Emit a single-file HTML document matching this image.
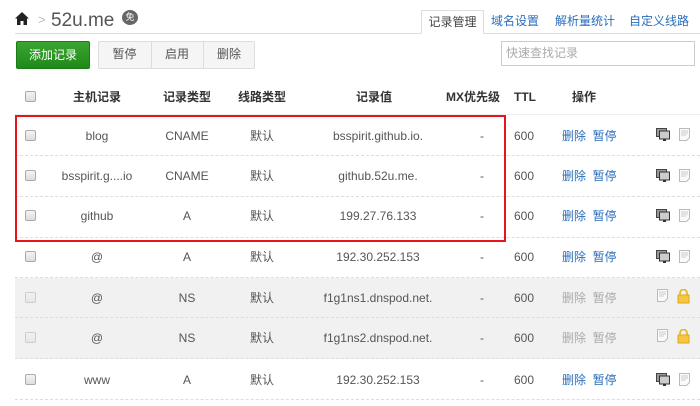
<!DOCTYPE html>
<html><head><meta charset="utf-8"><style>
*{margin:0;padding:0;box-sizing:border-box}
body{width:700px;height:406px;overflow:hidden;background:#fff;font-family:"Liberation Sans","Noto Sans CJK SC",sans-serif;font-size:12px;line-height:14px;color:#555;position:relative}
.a{position:absolute}
.c{position:absolute;transform:translateX(-50%);white-space:nowrap}
.cb{position:absolute;left:25px;width:11px;height:11px;border:1px solid #aaa;border-radius:2px;background:linear-gradient(#f4f4f4,#ddd)}
.row{position:absolute;left:15px;width:685px;border-bottom:1px dashed #ddd}
.tab{position:absolute;top:10px;height:24px;line-height:22px;font-size:12px;color:#2a6ebb;text-align:center}
.btn{position:absolute;top:41px;height:28px;line-height:26px;text-align:center;font-size:12px}
.blue{color:#2a6ebb}
</style></head><body>
<!-- header -->
<svg class="a" style="left:15px;top:12px" width="14" height="13" viewBox="0 0 14 13"><path d="M7 0L0 6.5h2V13h3.5V9h3v4H12V6.5h2z" fill="#222"/></svg>
<div class="a" style="left:38px;top:13px;font-size:13px;color:#bbb">&gt;</div>
<div class="a" style="left:51px;top:10px;font-size:19px;line-height:22px;color:#555">52u.me</div>
<div class="a" style="left:122px;top:10px;width:16px;height:15px;border-radius:50%;background:#666;color:#fff;font-size:9px;text-align:center;line-height:15px">免</div>
<div class="a" style="left:15px;top:33px;width:685px;height:1px;background:#ddd"></div>
<div class="tab" style="left:421px;width:63px;border:1px solid #ddd;border-bottom:1px solid #fff;background:#fff;color:#444">记录管理</div>
<div class="tab" style="left:485px;width:60px">域名设置</div>
<div class="tab" style="left:550px;width:70px">解析量统计</div>
<div class="tab" style="left:624px;width:70px">自定义线路</div>
<!-- buttons -->
<div class="btn" style="left:16px;width:74px;background:linear-gradient(#3aa530,#1f8a1a);border:1px solid #1c7a17;color:#fff;border-radius:2px">添加记录</div>
<div class="btn" style="left:98px;width:157px;border:1px solid #ddd;background:#f5f5f5;border-radius:2px"></div>
<div class="btn" style="left:98px;width:53px;color:#555">暂停</div>
<div class="a" style="left:151px;top:42px;width:1px;height:26px;background:#ddd"></div>
<div class="btn" style="left:151px;width:52px;color:#555">启用</div>
<div class="a" style="left:203px;top:42px;width:1px;height:26px;background:#ddd"></div>
<div class="btn" style="left:203px;width:52px;color:#555">删除</div>
<div class="a" style="left:501px;top:41px;width:194px;height:25px;border:1px solid #ccc;color:#aaa;line-height:23px;padding-left:4px">快速查找记录</div>
<!-- table header -->
<div class="cb" style="top:91px"></div>
<div style="font-weight:bold;color:#333">
<div class="c" style="left:97px;top:90px">主机记录</div>
<div class="c" style="left:187px;top:90px">记录类型</div>
<div class="c" style="left:262px;top:90px">线路类型</div>
<div class="c" style="left:374px;top:90px">记录值</div>
<div class="c" style="left:473px;top:90px">MX优先级</div>
<div class="a" style="left:514px;top:90px">TTL</div>
<div class="a" style="left:572px;top:90px">操作</div>
</div>
<div class="a" style="left:15px;top:114px;width:685px;height:1px;background:#eee"></div>
<!-- rows -->
<div class="row" style="top:115px;height:41px"></div>
<div class="row" style="top:156px;height:41px"></div>
<div class="row" style="top:197px;height:41px"></div>
<div class="row" style="top:238px;height:40px"></div>
<div class="row" style="top:278px;height:40px;background:#f1f1f1"></div>
<div class="row" style="top:318px;height:41px;background:#f1f1f1"></div>
<div class="row" style="top:359px;height:41px"></div>
<!-- row contents -->
<div>
<div class="cb" style="top:130px"></div><div class="c" style="left:97px;top:129px">blog</div><div class="c" style="left:187px;top:129px">CNAME</div><div class="c" style="left:262px;top:129px">默认</div><div class="c" style="left:378px;top:129px">bsspirit.github.io.</div><div class="c" style="left:482px;top:129px">-</div><div class="a" style="left:514px;top:129px">600</div>
<div class="cb" style="top:170px"></div><div class="c" style="left:97px;top:169px">bsspirit.g....io</div><div class="c" style="left:187px;top:169px">CNAME</div><div class="c" style="left:262px;top:169px">默认</div><div class="c" style="left:378px;top:169px">github.52u.me.</div><div class="c" style="left:482px;top:169px">-</div><div class="a" style="left:514px;top:169px">600</div>
<div class="cb" style="top:210px"></div><div class="c" style="left:97px;top:209px">github</div><div class="c" style="left:187px;top:209px">A</div><div class="c" style="left:262px;top:209px">默认</div><div class="c" style="left:378px;top:209px">199.27.76.133</div><div class="c" style="left:482px;top:209px">-</div><div class="a" style="left:514px;top:209px">600</div>
<div class="cb" style="top:251px"></div><div class="c" style="left:97px;top:250px">@</div><div class="c" style="left:187px;top:250px">A</div><div class="c" style="left:262px;top:250px">默认</div><div class="c" style="left:378px;top:250px">192.30.252.153</div><div class="c" style="left:482px;top:250px">-</div><div class="a" style="left:514px;top:250px">600</div>
<div class="cb" style="top:292px;opacity:.5"></div><div class="c" style="left:97px;top:291px">@</div><div class="c" style="left:187px;top:291px">NS</div><div class="c" style="left:262px;top:291px">默认</div><div class="c" style="left:378px;top:291px">f1g1ns1.dnspod.net.</div><div class="c" style="left:482px;top:291px">-</div><div class="a" style="left:514px;top:291px">600</div>
<div class="cb" style="top:332px;opacity:.5"></div><div class="c" style="left:97px;top:331px">@</div><div class="c" style="left:187px;top:331px">NS</div><div class="c" style="left:262px;top:331px">默认</div><div class="c" style="left:378px;top:331px">f1g1ns2.dnspod.net.</div><div class="c" style="left:482px;top:331px">-</div><div class="a" style="left:514px;top:331px">600</div>
<div class="cb" style="top:374px"></div><div class="c" style="left:97px;top:373px">www</div><div class="c" style="left:187px;top:373px">A</div><div class="c" style="left:262px;top:373px">默认</div><div class="c" style="left:378px;top:373px">192.30.252.153</div><div class="c" style="left:482px;top:373px">-</div><div class="a" style="left:514px;top:373px">600</div>
</div>
<!-- ops -->
<div class="a blue" style="left:562px;top:129px">删除&nbsp;&nbsp;暂停</div>
<div class="a blue" style="left:562px;top:169px">删除&nbsp;&nbsp;暂停</div>
<div class="a blue" style="left:562px;top:209px">删除&nbsp;&nbsp;暂停</div>
<div class="a blue" style="left:562px;top:250px">删除&nbsp;&nbsp;暂停</div>
<div class="a" style="left:562px;top:291px;color:#aaa">删除&nbsp;&nbsp;暂停</div>
<div class="a" style="left:562px;top:331px;color:#aaa">删除&nbsp;&nbsp;暂停</div>
<div class="a blue" style="left:562px;top:373px">删除&nbsp;&nbsp;暂停</div>
<!-- icons -->
<svg width="0" height="0" style="position:absolute"><defs>
<g id="mon"><rect x="0.5" y="0.5" width="10" height="8" fill="#999" stroke="#444"/><rect x="3.5" y="3" width="10" height="8" fill="#ccc" stroke="#333"/><rect x="7" y="11" width="3" height="2" fill="#333"/></g>
<g id="doc"><path d="M1.5 .5h10v9l-3 3h-7z" fill="#fafafa" stroke="#bbb"/><path d="M3 3h7M3 5h7M3 7h5" stroke="#ccc"/></g>
<g id="lock"><path d="M3 6V4a3.5 3.5 0 0 1 7 0v2" fill="none" stroke="#e8b020" stroke-width="1.6"/><rect x="1" y="6" width="11" height="8" fill="#f7c640" stroke="#e0a820"/></g>
</defs></svg>
<svg class="a" style="left:656px;top:128px" width="36" height="15"><use href="#mon"/><use href="#doc" x="22"/></svg>
<svg class="a" style="left:656px;top:169px" width="36" height="15"><use href="#mon"/><use href="#doc" x="22"/></svg>
<svg class="a" style="left:656px;top:209px" width="36" height="15"><use href="#mon"/><use href="#doc" x="22"/></svg>
<svg class="a" style="left:656px;top:250px" width="36" height="15"><use href="#mon"/><use href="#doc" x="22"/></svg>
<svg class="a" style="left:656px;top:289px" width="36" height="16"><use href="#doc"/><use href="#lock" x="21"/></svg>
<svg class="a" style="left:656px;top:329px" width="36" height="16"><use href="#doc"/><use href="#lock" x="21"/></svg>
<svg class="a" style="left:656px;top:373px" width="36" height="15"><use href="#mon"/><use href="#doc" x="22"/></svg>
<!-- red box -->
<div class="a" style="left:15px;top:115px;width:491px;height:127px;border:2px solid #e8141c"></div>
</body></html>
